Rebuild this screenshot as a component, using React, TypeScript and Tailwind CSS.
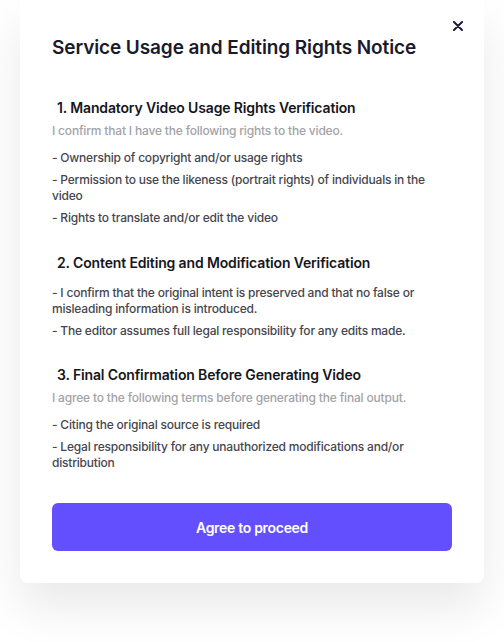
import React from "react";

function Section({
  title,
  desc,
  items,
  className,
}: {
  title: string;
  desc?: string;
  items: string[];
  className?: string;
}) {
  return (
    <div className={className}>
      <h2 className="pl-[5px] text-[14px] font-semibold leading-[20px] tracking-[-0.14px] text-[#16161d]">{title}</h2>
      {desc && (
        <p className="mt-[5px] text-[12px] font-medium leading-[16px] tracking-[-0.18px] text-[#a3a3a8]">{desc}</p>
      )}
      <ul className={`flex flex-col gap-[6px] ${desc ? "mt-[11px]" : "mt-[12px]"}`}>
        {items.map((t) => (
          <li key={t} className="text-[12px] font-medium leading-[16px] tracking-[-0.2px] text-[#46464e]">
            {t}
          </li>
        ))}
      </ul>
    </div>
  );
}

export default function App() {
  return (
    <div className="min-h-[642px] w-[504px] bg-white" style={{ fontFamily: "Inter, 'Noto Sans', sans-serif" }}>
      <div className="relative mx-[20px] w-[464px] rounded-b-[8px] bg-white px-[32px] pb-[32px] pt-[34px] shadow-[0_24px_48px_rgba(0,0,0,0.09)]">
        <button className="absolute right-[21px] top-[21px] flex h-[10px] w-[10px] items-center justify-center text-[#1c1b33]">
          <svg width="10" height="10" viewBox="0 0 10 10" fill="none">
            <path d="M1 1L9 9M9 1L1 9" stroke="currentColor" strokeWidth="2" strokeLinecap="round" />
          </svg>
        </button>
        <h1 className="text-[19px] font-semibold leading-[28px] tracking-[-0.1px] text-[#1a1a2b]">
          Service Usage and Editing Rights Notice
        </h1>
        <Section
          className="mt-[36px]"
          title="1. Mandatory Video Usage Rights Verification"
          desc="I confirm that I have the following rights to the video."
          items={[
            "- Ownership of copyright and/or usage rights",
            "- Permission to use the likeness (portrait rights) of individuals in the video",
            "- Rights to translate and/or edit the video",
          ]}
        />
        <Section
          className="mt-[27px]"
          title="2. Content Editing and Modification Verification"
          items={[
            "- I confirm that the original intent is preserved and that no false or misleading information is introduced.",
            "- The editor assumes full legal responsibility for any edits made.",
          ]}
        />
        <Section
          className="mt-[26px]"
          title="3. Final Confirmation Before Generating Video"
          desc="I agree to the following terms before generating the final output."
          items={[
            "- Citing the original source is required",
            "- Legal responsibility for any unauthorized modifications and/or distribution",
          ]}
        />
        <button className="mt-[32px] flex h-[48px] w-full items-center justify-center rounded-[6px] bg-[#644fff] text-[14px] font-semibold tracking-[-0.3px] text-white">
          Agree to proceed
        </button>
      </div>
    </div>
  );
}
